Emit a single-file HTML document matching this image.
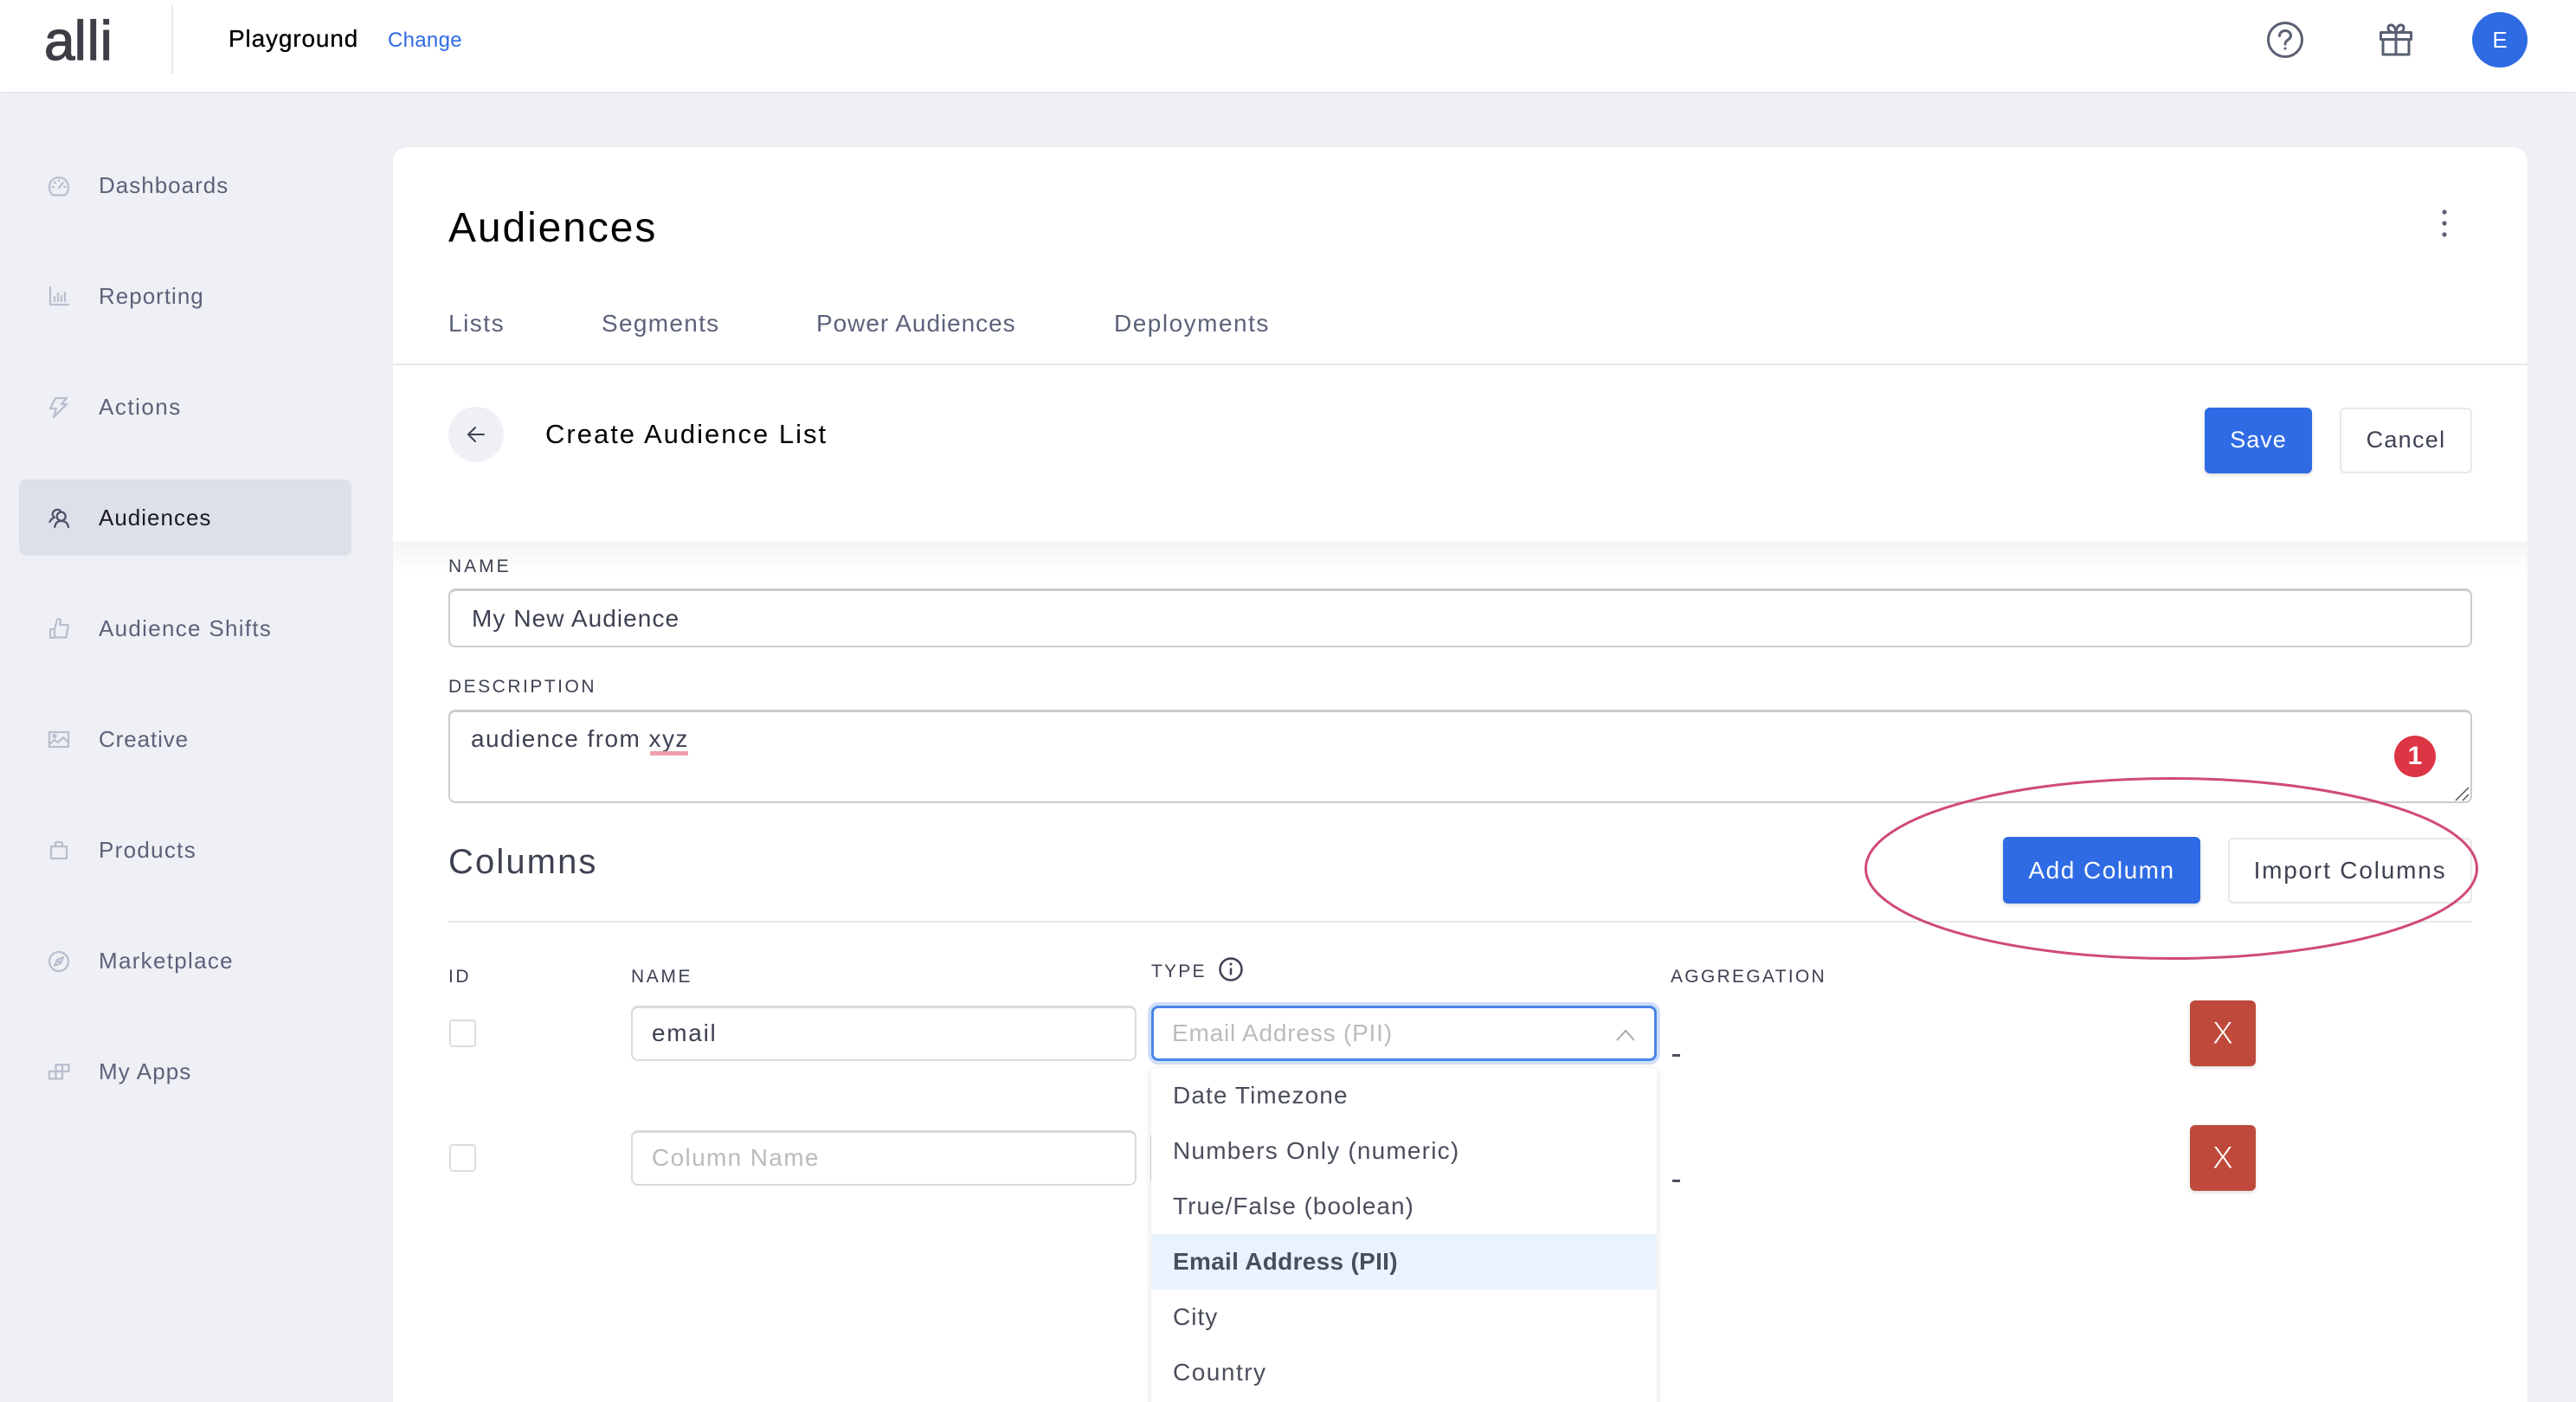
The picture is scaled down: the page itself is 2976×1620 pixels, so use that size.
<!DOCTYPE html>
<html lang="en">
<head>
<meta charset="utf-8">
<title>Audiences</title>
<style>
html,body{margin:0;padding:0;width:2976px;height:1620px;overflow:hidden;background:#eff0f5;}
body{position:relative;font-family:"Liberation Sans",sans-serif;color:#3d4152;}
.a{position:absolute;box-sizing:border-box;}
.t{position:absolute;white-space:nowrap;line-height:40px;height:40px;}
.nav{font-size:26px;letter-spacing:1px;color:#5c627a;left:114px;}
.tab{font-size:28px;color:#5c627a;top:354px;}
.lab{font-size:21px;letter-spacing:2.5px;color:#3d4152;}
.inp{font-size:28px;}
.opt{font-size:28px;letter-spacing:1.1px;color:#4a4e5c;left:1355px;}
.btn{position:absolute;box-sizing:border-box;border-radius:6px;text-align:center;font-size:27px;letter-spacing:1px;}
.blue{background:#2f6be4;color:#fff;box-shadow:0 2px 4px rgba(0,0,0,.15);}
.ghost{background:#fff;border:2px solid #e8e8ec;color:#3d4152;}
.field{position:absolute;box-sizing:border-box;background:#fff;border:2px solid #ccc;border-top-width:3px;border-radius:8px;}
.soft{border-color:#dadada;}
.cb{position:absolute;box-sizing:border-box;left:519px;width:31px;height:32px;border:2px solid #ddd;border-radius:4px;background:#fff;}
.x{position:absolute;left:2530px;width:76px;height:76px;border-radius:6px;background:#bf4a3b;color:#fff;text-align:center;font-size:37px;line-height:76px;-webkit-text-stroke:1px #bf4a3b;box-shadow:0 2px 4px rgba(0,0,0,.15);}
svg{position:absolute;overflow:visible;}
.i{fill:none;stroke:#b8bfce;stroke-width:2.300;stroke-linecap:round;stroke-linejoin:round;}
</style>
</head>
<body>

<!-- top bar -->
<div class="a" style="left:0;top:0;width:2976px;height:106px;background:#fff;box-shadow:0 1px 3px rgba(0,0,0,.06);"></div>
<div class="t" style="left:51px;top:12px;height:70px;line-height:70px;font-size:64px;color:#3d3e45;-webkit-text-stroke:1.200px #3d3e45;"><span style="letter-spacing:-1px">a</span><span style="letter-spacing:.8px">lli</span></div>
<div class="a" style="left:198px;top:6px;width:2px;height:80px;background:#e8e8ec;"></div>
<div class="t" style="left:264px;top:25px;font-size:28px;letter-spacing:.85px;color:#000;-webkit-text-stroke:.3px #000;">Playground</div>
<div class="t" style="left:448px;top:27px;font-size:24px;letter-spacing:.3px;color:#2f6be4;">Change</div>

<svg style="left:2619px;top:25px" width="42" height="42" viewBox="0 0 42 42" fill="none" stroke="#5a5f73" stroke-width="3" stroke-linecap="round">
  <circle cx="21" cy="21" r="19.5"/>
  <path d="M14.5 16.5c0-3.800 3-6 6.500-6s6.500 2.300 6.500 5.800c0 4.700-6.500 4.700-6.500 9.700"/>
  <circle cx="21" cy="31" r="1.500" fill="#5a5f73" stroke="none"/>
</svg>
<svg style="left:2749px;top:27px" width="38" height="38" viewBox="0 0 38 38" fill="none" stroke="#5a5f73" stroke-width="3" stroke-linejoin="round">
  <path d="M1.500 10.500h35v8h-35zM4 18.500v17.500h30v-17.500M19 10.500v25.500"/>
  <path d="M19 10.500c-3 0-9 0-9-5 0-5.500 8-5.500 9 5zM19 10.500c3 0 9 0 9-5 0-5.500-8-5.500-9 5z"/>
</svg>
<div class="a" style="left:2856px;top:14px;width:64px;height:64px;border-radius:50%;background:#2f6be3;color:#fff;font-size:26px;line-height:64px;text-align:center;">E</div>

<!-- sidebar -->
<div class="a" style="left:22px;top:554px;width:384px;height:88px;background:#dee0e9;border-radius:8px;"></div>

<svg style="left:56px;top:203px" width="24" height="24" viewBox="0 0 24 24"><path class="i" d="M5 22.500C2.500 20.500 1 17 1 13A11 11 0 0 1 23 13C23 17 21.500 20.500 19 22.500ZM12 14l4.500-5.500M4.500 13H6M18 13h1.500M7 7.500l1 1M12 5v1"/></svg>
<div class="t nav" style="top:194px">Dashboards</div>

<svg style="left:57px;top:331px" width="22" height="22" viewBox="0 0 22 22"><path class="i" d="M1 1v20h21M6 17v-5M10 17v-9M14 17v-6M18 17V7"/></svg>
<div class="t nav" style="top:322px">Reporting</div>

<svg style="left:57px;top:457px" width="22" height="26" viewBox="0 0 22 26"><path class="i" d="M7 3H20L14 10H20L5 25L8 15H1Z"/></svg>
<div class="t nav" style="top:450px;letter-spacing:1.500px">Actions</div>

<svg style="left:57px;top:587px" width="22" height="23" viewBox="0 0 22 23" fill="none" stroke="#4d5266" stroke-width="2.300" stroke-linecap="round" stroke-linejoin="round"><circle cx="13.700" cy="9.700" r="5"/><path d="M6.300 22C7 17 10 15 14 15S21 17 22 22M.5 16C2 13 4 11.500 6 11C3.500 9 3 6 5 4C7 1.500 11 1 13 3.500"/></svg>
<div class="t nav" style="top:578px;color:#1a1a1f;">Audiences</div>

<svg style="left:57px;top:714px" width="23" height="24" viewBox="0 0 23 24"><path class="i" d="M1 13H6V23H1ZM6 13L9 2C10 .5 13 1 13 3L12 8H20C21.500 8 22 9 21.700 10L19.500 22.500H6"/></svg>
<div class="t nav" style="top:706px;letter-spacing:1.300px">Audience Shifts</div>

<svg style="left:56px;top:845px" width="24" height="19" viewBox="0 0 24 19"><path class="i" d="M1 1h22v17H1zM1 15l6-5 4 3 6-6 6 6"/><circle class="i" cx="7" cy="5.500" r="1.500"/></svg>
<div class="t nav" style="top:834px;letter-spacing:.9px">Creative</div>

<svg style="left:58px;top:972px" width="20" height="21" viewBox="0 0 20 21"><path class="i" d="M1 6h18v14H1zM6 6V2.500C6 1.500 7 1 8 1h4c1 0 2 .5 2 1.500V6"/></svg>
<div class="t nav" style="top:962px;letter-spacing:1.300px">Products</div>

<svg style="left:56px;top:1099px" width="24" height="24" viewBox="0 0 24 24"><circle class="i" cx="12" cy="12" r="11"/><path class="i" d="M17 7l-7 3-3 7 7-3zM10 10l4 4"/></svg>
<div class="t nav" style="top:1090px;letter-spacing:1.300px">Marketplace</div>

<svg style="left:56px;top:1229px" width="25" height="19" viewBox="0 0 25 19"><path class="i" d="M1 9H16V17.500H1ZM8.500 1.300H23.500V9H8.500ZM8.500 9V17.500M16 1.300V9"/></svg>
<div class="t nav" style="top:1218px;letter-spacing:1.100px">My Apps</div>

<!-- main card -->
<div class="a" style="left:454px;top:170px;width:2466px;height:1460px;background:#fff;border-radius:16px 16px 0 0;box-shadow:0 0 4px rgba(0,0,0,.03);"></div>
<div class="t" style="left:518px;top:244px;font-size:48px;letter-spacing:1.900px;color:#000;">Audiences</div>
<svg style="left:2818px;top:240px" width="12" height="36" viewBox="0 0 12 36" fill="#5a5f73"><circle cx="6" cy="5" r="2.600"/><circle cx="6" cy="18" r="2.600"/><circle cx="6" cy="31" r="2.600"/></svg>

<div class="t tab" style="left:518px;letter-spacing:1.500px;">Lists</div>
<div class="t tab" style="left:695px;letter-spacing:1.300px;">Segments</div>
<div class="t tab" style="left:943px;letter-spacing:.95px;">Power Audiences</div>
<div class="t tab" style="left:1287px;letter-spacing:1.500px;">Deployments</div>
<div class="a" style="left:454px;top:420px;width:2466px;height:2px;background:#e8e8ec;"></div>

<div class="a" style="left:518px;top:470px;width:64px;height:64px;border-radius:50%;background:#eff0f5;"></div>
<svg style="left:539px;top:491px" width="22" height="22" viewBox="0 0 22 22" fill="none" stroke="#3d4152" stroke-width="2" stroke-linecap="round" stroke-linejoin="round"><path d="M20 11H2M10 3l-8 8 8 8"/></svg>
<div class="t" style="left:630px;top:482px;font-size:31px;letter-spacing:2px;color:#000;">Create Audience List</div>

<div class="btn blue" style="left:2547px;top:471px;width:124px;height:76px;line-height:74px;">Save</div>
<div class="btn ghost" style="left:2703px;top:471px;width:153px;height:76px;line-height:70px;letter-spacing:1.300px;">Cancel</div>

<!-- sticky shadow -->
<div class="a" style="left:454px;top:626px;width:2466px;height:34px;background:linear-gradient(#f4f4f5,#fff);"></div>

<div class="t lab" style="left:518px;top:635px;letter-spacing:3px;">NAME</div>
<div class="field" style="left:518px;top:680px;width:2338px;height:68px;"></div>
<div class="t inp" style="left:545px;top:695px;letter-spacing:1.070px;color:#3d4152;">My New Audience</div>

<div class="t lab" style="left:518px;top:774px;">DESCRIPTION</div>
<div class="field" style="left:518px;top:820px;width:2338px;height:108px;"></div>
<div class="t inp" style="left:544px;top:834px;letter-spacing:1.450px;color:#3d4152;">audience from xyz</div>
<div class="a" style="left:751px;top:868px;width:44px;height:5px;background:#ee9fae;"></div>
<div class="a" style="left:2766px;top:850px;width:48px;height:48px;border-radius:50%;background:#dc3545;color:#fff;font-size:30px;font-weight:700;line-height:48px;text-align:center;">1</div>
<svg style="left:2836px;top:908px" width="18" height="18" viewBox="0 0 18 18" stroke="#555" stroke-width="1.500" fill="none"><path d="M1 17L16 2M9 17l7-7"/></svg>

<div class="t" style="left:518px;top:976px;font-size:40px;letter-spacing:2.100px;color:#3d4152;">Columns</div>
<div class="btn blue" style="left:2314px;top:967px;width:228px;height:77px;line-height:77px;font-size:28px;letter-spacing:1.500px;">Add Column</div>
<div class="btn ghost" style="left:2574px;top:968px;width:282px;height:76px;line-height:72px;font-size:28px;letter-spacing:1.800px;">Import Columns</div>
<div class="a" style="left:518px;top:1064px;width:2338px;height:2px;background:#e8e8ec;"></div>

<!-- table header -->
<div class="t lab" style="left:518px;top:1109px;">ID</div>
<div class="t lab" style="left:729px;top:1109px;letter-spacing:2.600px;">NAME</div>
<div class="t lab" style="left:1330px;top:1103px;letter-spacing:2.200px;">TYPE</div>
<svg style="left:1408px;top:1106px" width="28" height="28" viewBox="0 0 28 28" fill="none" stroke="#3d4152" stroke-width="2.500"><circle cx="14" cy="14" r="12.500"/><path d="M14 12.500v8"/><circle cx="14" cy="8" r="1.500" fill="#3d4152" stroke="none"/></svg>
<div class="t lab" style="left:1930px;top:1109px;letter-spacing:2.300px;">AGGREGATION</div>

<!-- row 1 -->
<div class="cb" style="top:1178px;"></div>
<div class="field soft" style="left:729px;top:1162px;width:584px;height:64px;"></div>
<div class="t inp" style="left:753px;top:1174px;letter-spacing:1.700px;color:#3d4152;">email</div>
<div class="a" style="left:1330px;top:1162px;width:584px;height:64px;background:#fff;border:3px solid #4a85e8;border-radius:8px;box-shadow:0 0 0 4px #d0dff8;"></div>
<div class="t inp" style="left:1354px;top:1174px;letter-spacing:.8px;color:#bbb;">Email Address (PII)</div>
<svg style="left:1867px;top:1189px" width="22" height="14" viewBox="0 0 22 14" fill="none" stroke="#aaa" stroke-width="2"><path d="M1 13L11 2l10 11"/></svg>
<div class="a" style="left:1932px;top:1218px;width:9px;height:3px;background:#4a4e5c;"></div>
<div class="x" style="top:1156px;">X</div>

<!-- row 2 -->
<div class="cb" style="top:1322px;"></div>
<div class="field soft" style="left:729px;top:1306px;width:584px;height:64px;"></div>
<div class="t inp" style="left:753px;top:1318px;letter-spacing:1.350px;color:#bbb;">Column Name</div>
<div class="field soft" style="left:1329px;top:1306px;width:40px;height:64px;"></div>
<div class="a" style="left:1932px;top:1363px;width:9px;height:3px;background:#4a4e5c;"></div>
<div class="x" style="top:1300px;">X</div>

<!-- dropdown -->
<div class="a" style="left:1330px;top:1234px;width:584px;height:400px;background:#fff;border-radius:6px 6px 0 0;box-shadow:0 2px 10px rgba(0,0,0,.12);"></div>
<div class="a" style="left:1330px;top:1426px;width:584px;height:64px;background:#e9f3fe;"></div>
<div class="t opt" style="top:1246px;">Date Timezone</div>
<div class="t opt" style="top:1310px;letter-spacing:1.200px;">Numbers Only (numeric)</div>
<div class="t opt" style="top:1374px;letter-spacing:1px;">True/False (boolean)</div>
<div class="t opt" style="top:1438px;font-weight:700;letter-spacing:.3px;">Email Address (PII)</div>
<div class="t opt" style="top:1502px;letter-spacing:1px;">City</div>
<div class="t opt" style="top:1566px;letter-spacing:1.500px;">Country</div>

<!-- annotation -->
<svg style="left:0;top:0" width="2976" height="1620" viewBox="0 0 2976 1620" fill="none"><ellipse cx="2508.500" cy="1003.500" rx="353" ry="104" stroke="#d04a78" stroke-width="3"/></svg>
</body>
</html>
